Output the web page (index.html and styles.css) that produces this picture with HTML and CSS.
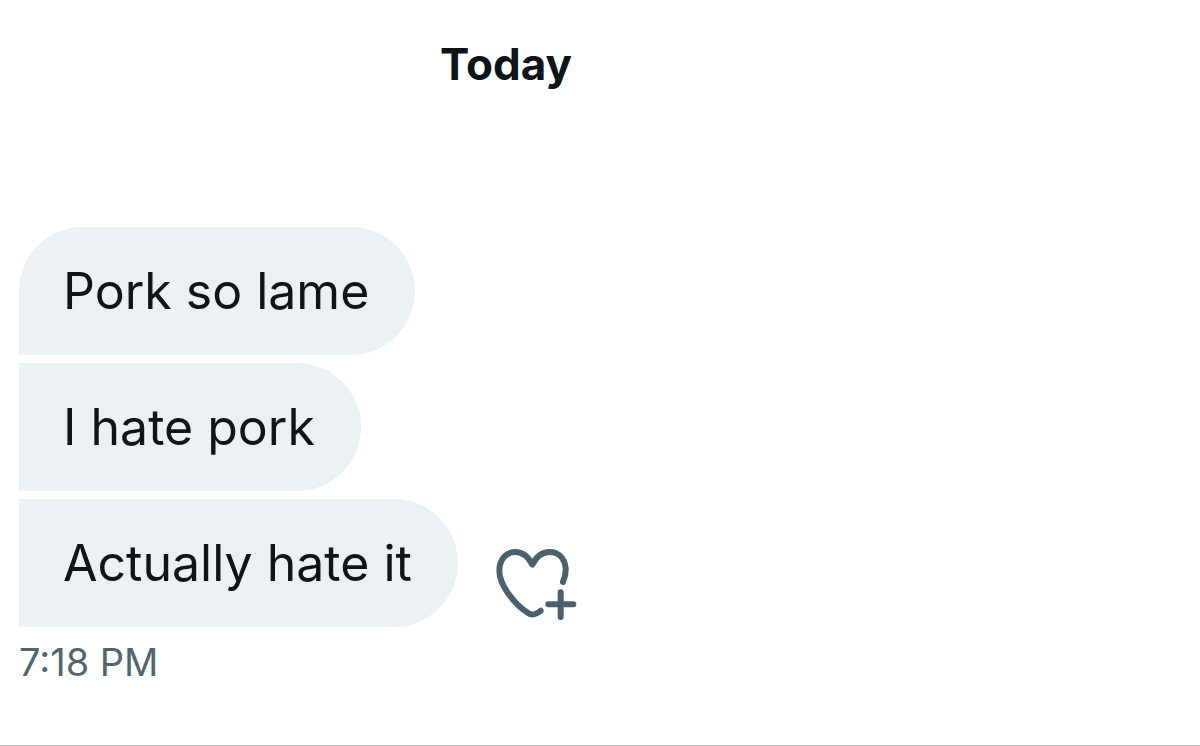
FILE: index.html
```
<!DOCTYPE html>
<html lang="en">
<head>
    <meta charset="UTF-8">
    <meta name="viewport" content="width=device-width, initial-scale=1.0">
    <title>Messages</title>
    <link rel="stylesheet" href="styles.css">
</head>
<body>
    <main class="chat">
        <h2 class="day">Today</h2>
        <div class="messages">
            <div class="row">
                <p class="bubble first">Pork so lame</p>
            </div>
            <div class="row">
                <p class="bubble">I hate pork</p>
            </div>
            <div class="row">
                <p class="bubble">Actually hate it</p>
                <button class="react" type="button" aria-label="Add reaction">
                    <svg viewBox="42 50 252 228" width="84" height="76" fill="none" stroke="#4b5f6d" stroke-width="18" stroke-linecap="round" stroke-linejoin="round">
                        <path d="M249 155C256 138 258 127 257 113C253 80 233 65 209 65C188 65 170 77 157 103C144 77 127 65 105 65C80 65 58 87 58 121C58 165 105 224 144 248Q154 255 165 251Q174 248 182 241"/>
                        <path d="M242 186V260M205 222H280"/>
                    </svg>
                </button>
            </div>
        </div>
        <time class="time">7:18 PM</time>
    </main>
</body>
</html>
```
FILE: styles.css
```
* {
    box-sizing: border-box;
}
body {
    margin: 0;
    min-height: 100vh;
    display: flex;
    background-color: white;
    color: #0f1419;
    font-family: Inter, "Liberation Sans", sans-serif;
}
.chat {
    flex: 1;
    padding: 34px 19px 0;
    border-bottom: 1px solid #c8c8c8;
}
.day {
    margin: 0 0 133px;
    padding-left: 421px;
    font-size: 44px;
    line-height: 60px;
    font-weight: 700;
}
.messages {
    display: flex;
    flex-direction: column;
    gap: 8px;
}
.row {
    display: flex;
    align-items: flex-end;
    gap: 36px;
}
.bubble {
    margin: 0;
    padding: 32px 46px 32px 44px;
    background-color: #ebf0f3;
    border-radius: 0 64px 64px 0;
    font-size: 50px;
    line-height: 64px;
}
.first {
    border-top-left-radius: 64px;
}
.react {
    display: flex;
    padding: 0 0 4px;
    border: none;
    background: none;
    cursor: pointer;
}
.time {
    display: block;
    margin-top: 11px;
    color: #536471;
    font-size: 38px;
    line-height: 48px;
}
```
